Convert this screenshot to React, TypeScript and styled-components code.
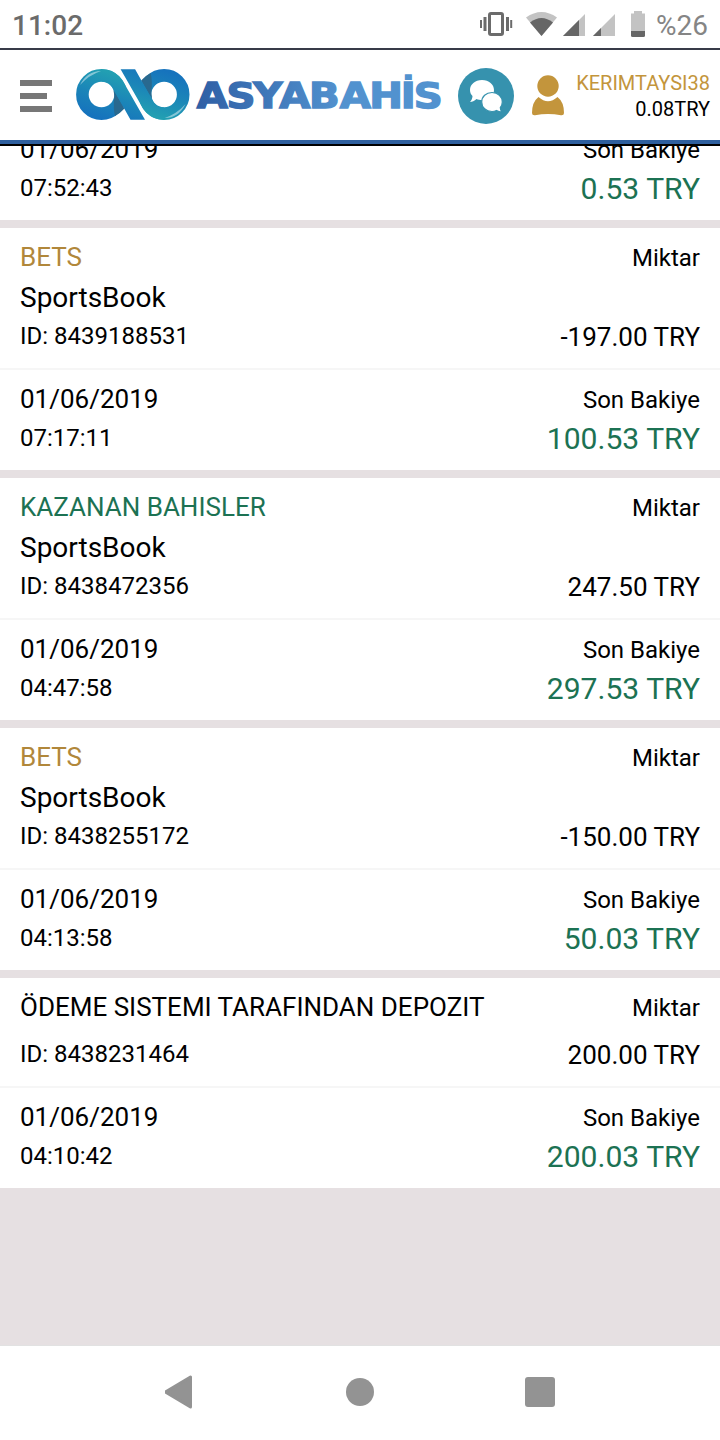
import React from "react";
import styled, { createGlobalStyle } from "styled-components";

const GlobalStyle = createGlobalStyle`
  * { box-sizing: border-box; }
  body { margin: 0; background: #fff; font-family: Roboto, "Liberation Sans", sans-serif; color: #000; }
  svg { display: block; flex: none; }
`;

const Screen = styled.div`
  width: 720px;
  height: 1440px;
  display: flex;
  flex-direction: column;
  background: #fff;
  overflow: hidden;
`;

const StatusBar = styled.div`
  flex: none;
  height: 50px;
  border-bottom: 2px solid #383b48;
  padding: 0 12px;
  display: flex;
  justify-content: space-between;
  line-height: 52px;
`;

const Clock = styled.span`
  font-size: 28px;
  font-weight: 500;
  color: #6b6b6b;
`;

const StatusIcons = styled.div`
  display: flex;
  align-items: flex-start;
`;

const BatteryText = styled.span`
  font-size: 28px;
  color: #858585;
  margin-left: 5px;
`;

const Header = styled.header`
  flex: none;
  height: 96px;
  border-bottom: 2px solid #000;
  box-shadow: inset 0 -4px 0 #2e5f9e;
  padding: 2px 10px 4px 20px;
  display: flex;
  align-items: center;
`;

const MenuButton = styled.div`
  display: flex;
  flex-direction: column;
  gap: 7px;
  width: 32px;
  margin-right: 22px;
`;

const MenuBar = styled.i<{ $w: number }>`
  width: ${(p) => p.$w}px;
  height: 6px;
  background: #777;
`;

const ChatButton = styled.div`
  margin-left: 16px;
`;

const UserButton = styled.div`
  margin-left: 18px;
`;

const Account = styled.div`
  margin-left: auto;
  text-align: right;
  font-size: 20px;
  line-height: 26px;
`;

const UserName = styled.div`
  color: #c3953c;
`;

const Content = styled.main`
  flex: 1;
  min-height: 0;
  overflow: hidden;
  background: #e6e0e2;
`;

const List = styled.div`
  margin-top: -26px;
  display: flex;
  flex-direction: column;
  gap: 8px;
`;

const Card = styled.article`
  background: #fff;
`;

const Section = styled.div<{ $h: number; $divided?: boolean }>`
  height: ${(p) => p.$h}px;
  padding: 0 20px;
  display: flex;
  justify-content: space-between;
  border-bottom: ${(p) => (p.$divided ? "2px solid #f6f6f6" : "none")};
`;

const Left = styled.div`
  display: flex;
  flex-direction: column;
  justify-content: space-between;
  padding: 9px 0 14px;
`;

const Right = styled.div`
  display: flex;
  flex-direction: column;
  justify-content: space-between;
  align-items: flex-end;
  padding: 12px 0 13px;
`;

const Line = styled.span<{ $size: number; $color?: string; $tall?: boolean }>`
  font-size: ${(p) => p.$size}px;
  line-height: ${(p) => (p.$tall ? 40 : 36)}px;
  color: ${(p) => p.$color || "#000"};
  white-space: nowrap;
`;

const NavBar = styled.nav`
  flex: none;
  height: 95px;
  border-top: 1px solid #e2e2e2;
  background: #fff;
  display: flex;
  justify-content: center;
  align-items: center;
  padding-bottom: 2px;
`;

const NavSlot = styled.div`
  width: 180px;
  display: flex;
  justify-content: center;
`;

const GOLD = "#b1873a";
const GREEN = "#1c7253";

interface Entry {
  title?: string;
  titleColor?: string;
  product?: string;
  id?: string;
  amount?: string;
  time: string;
  balance: string;
}

const entries: Entry[] = [
  { time: "07:52:43", balance: "0.53 TRY" },
  { title: "BETS", titleColor: GOLD, product: "SportsBook", id: "8439188531", amount: "-197.00 TRY", time: "07:17:11", balance: "100.53 TRY" },
  { title: "KAZANAN BAHISLER", titleColor: GREEN, product: "SportsBook", id: "8438472356", amount: "247.50 TRY", time: "04:47:58", balance: "297.53 TRY" },
  { title: "BETS", titleColor: GOLD, product: "SportsBook", id: "8438255172", amount: "-150.00 TRY", time: "04:13:58", balance: "50.03 TRY" },
  { title: "ÖDEME SISTEMI TARAFINDAN DEPOZIT", id: "8438231464", amount: "200.00 TRY", time: "04:10:42", balance: "200.03 TRY" },
];

const Transaction = ({ e }: { e: Entry }) => (
  <Card>
    {e.title && (
      <Section $h={e.product ? 142 : 110} $divided>
        <Left>
          <Line $size={26} $tall $color={e.titleColor}>{e.title}</Line>
          {e.product && <Line $size={28} $tall>{e.product}</Line>}
          <Line $size={24}>ID: {e.id}</Line>
        </Left>
        <Right>
          <Line $size={24}>Miktar</Line>
          <Line $size={26}>{e.amount}</Line>
        </Right>
      </Section>
    )}
    <Section $h={100}>
      <Left>
        <Line $size={26} $tall>01/06/2019</Line>
        <Line $size={24}>{e.time}</Line>
      </Left>
      <Right>
        <Line $size={24}>Son Bakiye</Line>
        <Line $size={30.1} $color={GREEN}>{e.balance}</Line>
      </Right>
    </Section>
  </Card>
);

const SystemIcons = () => (
  <svg width="172" height="48" viewBox="479 0 172 48">
    <g fill="#6b6b6b">
      <rect x="480" y="20" width="2" height="8" />
      <rect x="483.500" y="17" width="3" height="14" />
      <rect x="506" y="17" width="3" height="14" />
      <rect x="510.200" y="20" width="2" height="8" />
    </g>
    <rect x="489.500" y="13.500" width="13" height="21" rx="1.500" fill="none" stroke="#6b6b6b" strokeWidth="3" />
    <path d="M526 17.500Q541.500 6.500 557 17.500L541.500 36Z" fill="#c3c3c3" />
    <path d="M530 22.500Q541.500 13.500 553 22.500L541.500 36Z" fill="#666" />
    <path d="M585 14V36H563Z" fill="#c3c3c3" />
    <path d="M579 20V36H563Z" fill="#666" />
    <path d="M615 14V36H593Z" fill="#c3c3c3" />
    <path d="M601 28V36H593Z" fill="#666" />
    <path d="M634 11H642V13.500H645V31H631V13.500H634Z" fill="#c3c3c3" />
    <path d="M631 31H645V35.500Q645 37 643.500 37H632.500Q631 37 631 35.500Z" fill="#666" />
  </svg>
);

const Logo = () => (
  <svg width="368" height="64" viewBox="74 64 368 64">
    <defs>
      <linearGradient id="loop" gradientUnits="userSpaceOnUse" x1="108" y1="72" x2="94" y2="116">
        <stop offset="0" stopColor="#229fb2" />
        <stop offset="0.500" stopColor="#1b86b8" />
        <stop offset="1" stopColor="#1673bd" />
      </linearGradient>
      <linearGradient id="word" gradientUnits="userSpaceOnUse" x1="171" y1="0" x2="383" y2="0">
        <stop offset="0" stopColor="#2f5fa5" />
        <stop offset="0.600" stopColor="#5292cf" />
        <stop offset="1" stopColor="#5292cf" />
      </linearGradient>
      <g id="half">
        <circle cx="101.500" cy="94.500" r="19.100" fill="none" stroke="url(#loop)" strokeWidth="12.600" />
        <path d="M113.500 90L124.500 108.500Q120 113.500 115 116Q113 109 114.300 96Z" fill="#29698f" />
        <path d="M101.500 69.200A25.300 25.300 0 0 1 123 81.200L145 119.800H130.500L113.500 89.600A12.900 12.900 0 0 0 101.500 81.600Z" fill="url(#loop)" />
        <path d="M80 85Q87 71 101 71Q89 75 80 85Z" fill="#fff" opacity="0.450" />
      </g>
    </defs>
    <use href="#half" />
    <use href="#half" transform="rotate(180 132.800 94.500)" />
    <text
      transform="scale(1.150 1)"
      x="171 197 220.300 242.800 268.600 295.500 321 348.500 359.800"
      y="108"
      fill="url(#word)"
      stroke="url(#word)"
      strokeWidth="1.400"
      fontFamily="'DejaVu Sans', sans-serif"
      fontWeight="700"
      fontSize="35"
    >
      ASYABAHİS
    </text>
  </svg>
);

const ChatIcon = () => (
  <svg width="56" height="56" viewBox="458 68 56 56">
    <circle cx="486" cy="96" r="28" fill="#3692ae" />
    <path d="M482 80C489 80 494 84.500 494 90C494 96 489 100 482 100C480 100 478 99.700 476.500 99C474.500 101 472 102 470 102C471.500 100.500 472.500 98 472.500 96C471 94.500 470 92.500 470 90C470 84.500 475 80 482 80Z" fill="#fff" />
    <path d="M492 92.500C498 92.500 502.300 96.500 502.300 102C502.300 104 501.500 106 500.300 107.500C500.300 109.500 501 111 502 112C499.500 112 497.500 111.200 496.500 110.500C495 111.200 493.500 111.500 492 111.500C486 111.500 481.700 107.500 481.700 102C481.700 96.500 486 92.500 492 92.500Z" fill="#fff" stroke="#3692ae" strokeWidth="1.200" />
  </svg>
);

const UserIcon = () => (
  <svg width="32" height="42" viewBox="532 75 32 42">
    <circle cx="548" cy="86" r="10.700" fill="#c3953c" />
    <path d="M538.500 97Q548 105.500 557.500 97Q564 102 564 113Q564 115.500 561 115.200Q548 113 535 115.200Q532 115.500 532 113Q532 102 538.500 97Z" fill="#c3953c" />
  </svg>
);

export default function App() {
  return (
    <Screen>
      <GlobalStyle />
      <StatusBar>
        <Clock>11:02</Clock>
        <StatusIcons>
          <SystemIcons />
          <BatteryText>%26</BatteryText>
        </StatusIcons>
      </StatusBar>
      <Header>
        <MenuButton>
          <MenuBar $w={32} />
          <MenuBar $w={27} />
          <MenuBar $w={32} />
        </MenuButton>
        <Logo />
        <ChatButton>
          <ChatIcon />
        </ChatButton>
        <UserButton>
          <UserIcon />
        </UserButton>
        <Account>
          <UserName>KERIMTAYSI38</UserName>
          <div>0.08TRY</div>
        </Account>
      </Header>
      <Content>
        <List>
          {entries.map((e) => (
            <Transaction key={e.time} e={e} />
          ))}
        </List>
      </Content>
      <NavBar>
        <NavSlot>
          <svg width="30" height="34" viewBox="1.500 0 30 34"><path d="M2 17L27 2V32Z" fill="#939393" stroke="#939393" strokeWidth="3" strokeLinejoin="round" /></svg>
        </NavSlot>
        <NavSlot>
          <svg width="28" height="28"><circle cx="14" cy="14" r="14" fill="#939393" /></svg>
        </NavSlot>
        <NavSlot>
          <svg width="30" height="30"><rect width="30" height="30" rx="3" fill="#939393" /></svg>
        </NavSlot>
      </NavBar>
    </Screen>
  );
}
